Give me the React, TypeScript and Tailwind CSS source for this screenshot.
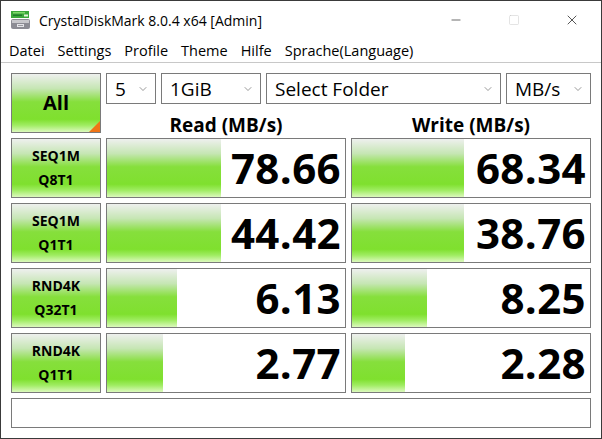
import { ChevronDown, Minus, Square, X } from "lucide-react";

const font = { fontFamily: '"Open Sans", "Noto Sans", sans-serif' };

const GREEN =
  "bg-[linear-gradient(to_bottom,#eef0ee_0%,#c6e6b4_25%,#86df3c_48%,#7fe02e_78%,#9eec60_88%,#dcf9bd_100%)]";

const rows = [
  { a: "SEQ1M", b: "Q8T1", read: "78.66", readW: 114, write: "68.34", writeW: 112 },
  { a: "SEQ1M", b: "Q1T1", read: "44.42", readW: 114, write: "38.76", writeW: 112 },
  { a: "RND4K", b: "Q32T1", read: "6.13", readW: 70, write: "8.25", writeW: 75 },
  { a: "RND4K", b: "Q1T1", read: "2.77", readW: 56, write: "2.28", writeW: 53 },
];

function AppIcon() {
  return (
    <svg width="22" height="22" viewBox="0 0 22 22">
      <rect x="1" y="2" width="18" height="7" fill="#3aa83a" />
      <rect x="3" y="3" width="12" height="1.5" fill="#7fd86a" />
      <rect x="3" y="5.5" width="9" height="1.5" fill="#1f7a2a" />
      <rect x="14" y="5.5" width="4" height="2" fill="#e8f5e0" />
      <rect x="1" y="10" width="19" height="10" rx="2" fill="#8c8c94" />
      <rect x="2" y="11" width="17" height="3" fill="#c8c8cc" />
      <rect x="7" y="15" width="7" height="3" fill="#e4e4e8" />
      <rect x="8" y="16" width="5" height="1" fill="#9a9aa0" />
    </svg>
  );
}

function Select({ label, w }: { label: string; w: string }) {
  return (
    <div
      className={`${w} h-[31px] border border-[#7a7a7a] bg-white flex items-center justify-between pl-[8px] pr-[6px] pt-[2px]`}
    >
      <span className="text-[19px] leading-none text-black">{label}</span>
      <ChevronDown size={12} strokeWidth={1.2} className="text-[#555] -mt-[2px]" />
    </div>
  );
}

function ResultBox({ value, w }: { value: string; w: number }) {
  return (
    <div className="relative h-[60px] border border-[#7a7a7a] bg-white flex items-stretch">
      <div className={`${GREEN} h-full`} style={{ width: w }} />
      <div className="absolute inset-0 flex items-center justify-end pr-[4px]">
        <span className="text-[42px] font-bold leading-none text-black tracking-[0.4px]">
          {value}
        </span>
      </div>
    </div>
  );
}

export default function App() {
  return (
    <div
      className="w-[602px] h-[439px] border border-[#3a3a3a] bg-white flex flex-col overflow-hidden"
      style={font}
    >
      {/* Title bar */}
      <div className="h-[38px] flex items-center shrink-0">
        <div className="pl-[9px] pr-[7px] flex items-center">
          <AppIcon />
        </div>
        <span className="text-[14px] text-black">CrystalDiskMark 8.0.4 x64 [Admin]</span>
        <div className="ml-auto flex items-center h-full">
          <div className="w-[58px] h-full flex items-center justify-center">
            <Minus size={14} strokeWidth={1} className="text-black" />
          </div>
          <div className="w-[58px] h-full flex items-center justify-center">
            <Square size={12} strokeWidth={1} className="text-[#c8c8c8]" />
          </div>
          <div className="w-[58px] h-full flex items-center justify-center">
            <X size={16} strokeWidth={1} className="text-black" />
          </div>
        </div>
      </div>

      {/* Menu bar */}
      <div className="h-[24px] flex items-center gap-[13px] pl-[8px] text-[14.5px] text-black border-b border-[#c8c8c8] shrink-0">
        <span>Datei</span>
        <span>Settings</span>
        <span>Profile</span>
        <span>Theme</span>
        <span>Hilfe</span>
        <span>Sprache(Language)</span>
      </div>

      {/* Main */}
      <div className="pl-[10px] pt-[10px] flex flex-col gap-[5px]">
        <div className="grid grid-cols-[90px_240px_240px] gap-[5px]">
          <div
            className={`relative row-span-2 h-[60px] border border-[#7a7a7a] ${GREEN} flex items-center justify-center`}
          >
            <span className="text-[20px] font-bold text-black">All</span>
            <svg className="absolute right-0 bottom-0" width="11" height="11" viewBox="0 0 11 11">
              <polygon points="11,0 11,11 0,11" fill="#f07417" />
            </svg>
          </div>
          <div className="col-span-2 flex gap-[5px]">
            <Select label="5" w="w-[50px]" />
            <Select label="1GiB" w="w-[100px]" />
            <Select label="Select Folder" w="w-[235px]" />
            <Select label="MB/s" w="w-[85px]" />
          </div>
          <div className="h-[24px] flex items-end justify-center">
            <span className="text-[19px] font-bold leading-none text-black -mb-[2px]">Read (MB/s)</span>
          </div>
          <div className="h-[24px] flex items-end justify-center">
            <span className="text-[19px] font-bold leading-none text-black -mb-[2px]">Write (MB/s)</span>
          </div>
        </div>

        {rows.map((r, i) => (
          <div key={i} className="grid grid-cols-[90px_240px_240px] gap-[5px]">
            <div
              className={`h-[60px] border border-[#7a7a7a] ${GREEN} flex flex-col items-center justify-center`}
            >
              <span className="text-[14px] font-bold leading-[24px] text-black">{r.a}</span>
              <span className="text-[14px] font-bold leading-[24px] text-black">{r.b}</span>
            </div>
            <ResultBox value={r.read} w={r.readW} />
            <ResultBox value={r.write} w={r.writeW} />
          </div>
        ))}

        <div className="w-[580px] h-[30px] border border-[#7a7a7a] bg-white" />
      </div>
    </div>
  );
}
